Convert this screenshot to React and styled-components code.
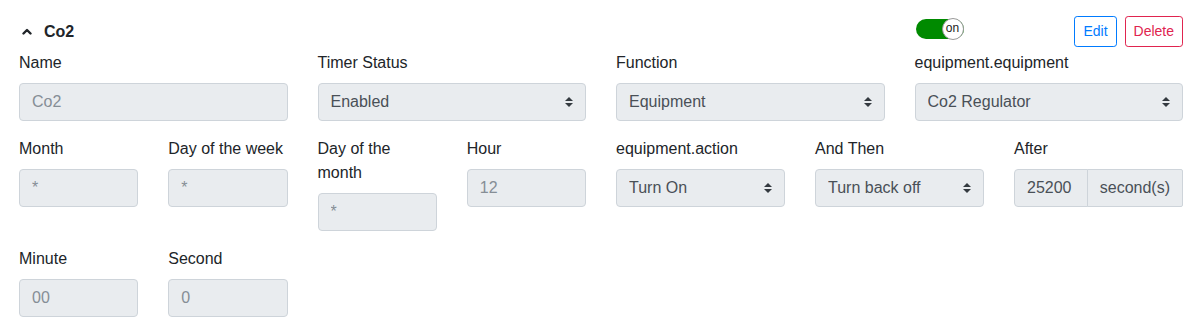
import React from "react";
import styled, { createGlobalStyle } from "styled-components";

const GlobalStyle = createGlobalStyle`
  html, body { margin: 0; padding: 0; background: #fff; }
  body {
    font-family: "Liberation Sans", Arial, Helvetica, sans-serif;
    font-size: 16px;
    line-height: 1.5;
    color: #212529;
  }
  * { box-sizing: border-box; }
`;

const Page = styled.div`
  padding: 16px 17px 0 19px;
`;

const Header = styled.div`
  display: grid;
  grid-template-columns: repeat(4, 1fr);
  column-gap: 30px;
  height: 31px;
  margin-bottom: 4px;
`;

const Title = styled.h5`
  grid-column: span 3;
  margin: 0;
  display: flex;
  align-items: center;
  font-size: 16px;
  font-weight: 700;
  line-height: 24px;
  padding-top: 1px;
`;

const Chevron = styled.svg`
  width: 10px;
  height: 7px;
  margin: 0 12px 2px 3px;
`;

const Actions = styled.div`
  display: flex;
  justify-content: space-between;
  align-items: flex-start;
`;

const Toggle = styled.span`
  position: relative;
  display: inline-block;
  width: 48px;
  height: 20px;
  margin: 3px 0 0 1px;
  border-radius: 10px;
  background: ${(p) => (p.$on ? "#008a00" : "#ccc")};
`;

const Knob = styled.span`
  position: absolute;
  top: -1px;
  right: 0;
  width: 22px;
  height: 22px;
  border-radius: 50%;
  background: #fff;
  border: 1px solid #9a9a9a;
  display: flex;
  align-items: center;
  justify-content: center;
  font-size: 12px;
  line-height: 1;
  color: #222;
  padding-bottom: 2px;
`;

const ButtonGroup = styled.div`
  display: flex;
  gap: 8px;
`;

const Button = styled.button`
  font-family: inherit;
  font-size: 14px;
  line-height: 21px;
  padding: 4px 8px;
  border-radius: 3.2px;
  background: transparent;
  border: 1px solid ${(p) => p.$color};
  color: ${(p) => p.$color};
  cursor: pointer;
`;

const Split = styled.div`
  display: grid;
  grid-template-columns: 1fr 1fr;
  column-gap: 30px;
  align-items: start;
`;

const Half = styled.div`
  display: grid;
  grid-template-columns: repeat(${(p) => p.$cols}, minmax(0, 1fr));
  column-gap: 30px;
  align-items: start;
`;

const FormGroup = styled.div`
  margin-bottom: 16px;
  min-width: 0;
`;

const Label = styled.label`
  display: block;
  margin-bottom: 8px;
  line-height: 24px;
`;

const Input = styled.input`
  display: block;
  width: 100%;
  height: 38px;
  padding: 6px 12px;
  font-family: inherit;
  font-size: 16px;
  line-height: 24px;
  color: ${(p) => (p.$muted ? "#868e96" : "#495057")};
  background: #e9ecef;
  border: 1px solid #ced4da;
  border-radius: 4px;
  outline: none;
`;

const SelectWrap = styled.div`
  position: relative;
`;

const Select = styled.select`
  display: block;
  width: 100%;
  height: 38px;
  padding: 6px 28px 6px 12px;
  font-family: inherit;
  font-size: 16px;
  line-height: 24px;
  color: #495057;
  background: #e9ecef;
  border: 1px solid #ced4da;
  border-radius: 4px;
  appearance: none;
  -webkit-appearance: none;
  opacity: 1;
`;

const Arrow = styled.svg`
  position: absolute;
  right: 13px;
  top: 14px;
  width: 8px;
  height: 10px;
  pointer-events: none;
`;

const InputGroup = styled.div`
  display: flex;
  width: 100%;
  overflow: hidden;
`;

const GroupInput = styled(Input)`
  flex: 1 1 auto;
  width: 1%;
  min-width: 0;
  border-radius: 4px 0 0 4px;
  padding-right: 13px;
`;

const Addon = styled.span`
  display: flex;
  align-items: center;
  height: 38px;
  margin-left: -1px;
  padding: 6px 12px;
  font-size: 16px;
  line-height: 24px;
  color: #495057;
  background: #e9ecef;
  border: 1px solid #ced4da;
  border-radius: 0 2px 2px 0;
  white-space: nowrap;
`;

function SelectField({ label, value }) {
  return (
    <FormGroup>
      <Label>{label}</Label>
      <SelectWrap>
        <Select disabled value={value} onChange={() => {}}>
          <option value={value}>{value}</option>
        </Select>
        <Arrow viewBox="0 0 4 5">
          <path fill="#343a40" d="M2 0L0 2h4zm0 5L0 3h4z" />
        </Arrow>
      </SelectWrap>
    </FormGroup>
  );
}

function TextField({ label, value }) {
  return (
    <FormGroup>
      <Label>{label}</Label>
      <Input $muted readOnly value={value} />
    </FormGroup>
  );
}

export default function App() {
  return (
    <>
      <GlobalStyle />
      <Page>
        <Header>
          <Title>
            <Chevron viewBox="0 0 10 7">
              <path
                d="M1.5 5.5L5 2l3.5 3.5"
                fill="none"
                stroke="#212529"
                strokeWidth="2.4"
                strokeLinecap="round"
                strokeLinejoin="round"
              />
            </Chevron>
            Co2
          </Title>
          <Actions>
            <Toggle $on>
              <Knob>on</Knob>
            </Toggle>
            <ButtonGroup>
              <Button $color="#007bff">Edit</Button>
              <Button $color="#e0244f">Delete</Button>
            </ButtonGroup>
          </Actions>
        </Header>

        <Split>
          <Half $cols={2}>
            <TextField label="Name" value="Co2" />
            <SelectField label="Timer Status" value="Enabled" />
          </Half>
          <Half $cols={2}>
            <SelectField label="Function" value="Equipment" />
            <SelectField label="equipment.equipment" value="Co2 Regulator" />
          </Half>
        </Split>

        <Split>
          <Half $cols={4}>
            <TextField label="Month" value="*" />
            <TextField label="Day of the week" value="*" />
            <TextField label="Day of the month" value="*" />
            <TextField label="Hour" value="12" />
          </Half>
          <Half $cols={3}>
            <SelectField label="equipment.action" value="Turn On" />
            <SelectField label="And Then" value="Turn back off" />
            <FormGroup>
              <Label>After</Label>
              <InputGroup>
                <GroupInput readOnly value="25200" />
                <Addon>second(s)</Addon>
              </InputGroup>
            </FormGroup>
          </Half>
        </Split>

        <Split>
          <Half $cols={4}>
            <TextField label="Minute" value="00" />
            <TextField label="Second" value="0" />
          </Half>
        </Split>
      </Page>
    </>
  );
}
